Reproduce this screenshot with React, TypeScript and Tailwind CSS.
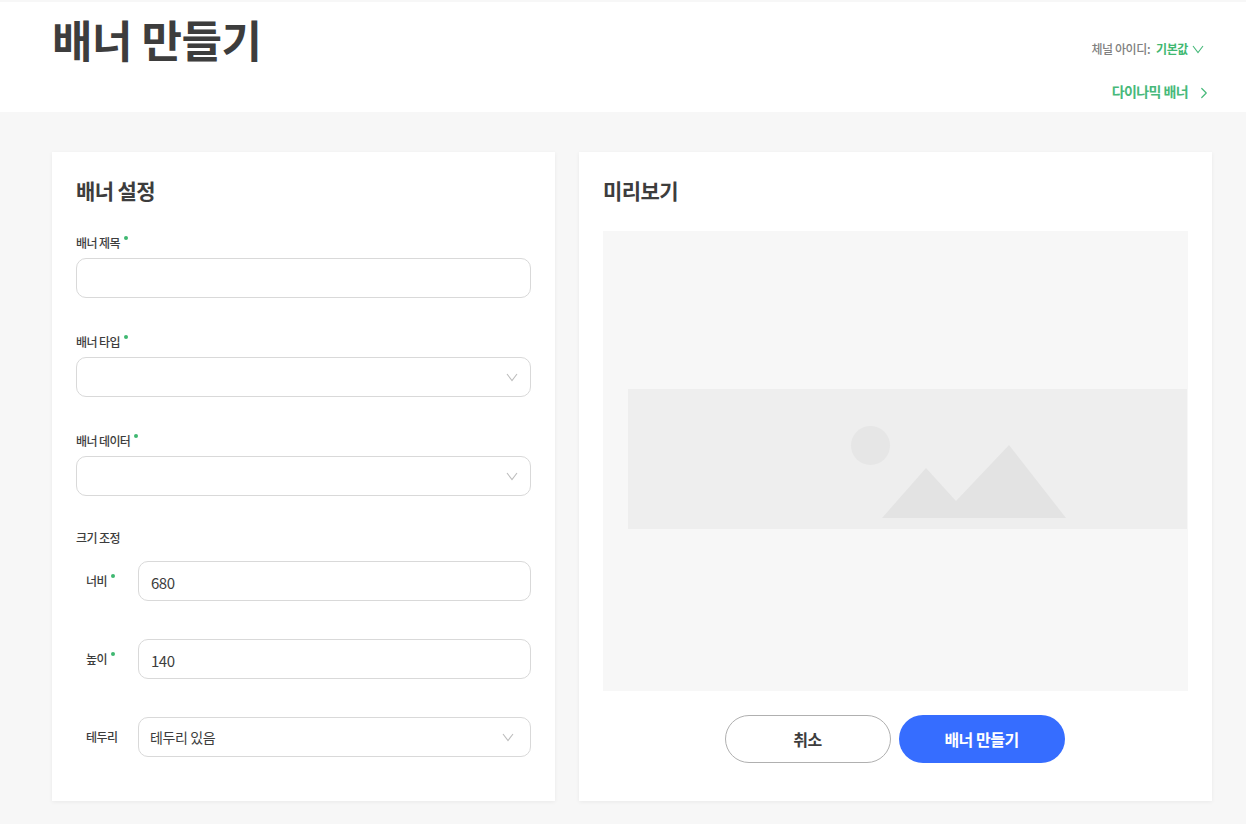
import React from "react";
import { ChevronRight } from "lucide-react";

const labelCls = "text-[12px] leading-[19px] font-medium text-[#3d3d3d] tracking-[-0.6px]";
const boxCls = "h-10 rounded-[10px] border border-[#d9d9d9] bg-white flex items-center justify-between text-[#3d3d3d]";

const Required = () => <span className="inline-block w-1 h-1 ml-1 rounded-full bg-[#3fb871] align-[8px]" />;

const Caret: React.FC<{ color?: string; className?: string }> = ({ color = "#bdbdbd", className }) => (
  <svg width="12" height="9" viewBox="0 0 12 9" fill="none" className={className}>
    <path d="M1 1 L6 7.5 L11 1" stroke={color} strokeWidth="1.1" />
  </svg>
);

const Field: React.FC<{ label: string; select?: boolean; className?: string }> = ({ label, select, className }) => (
  <div className={className}>
    <div className={labelCls}>
      {label}
      <Required />
    </div>
    <div className={`${boxCls} mt-[6px] pr-3`}>
      <span />
      {select && <Caret />}
    </div>
  </div>
);

const SizeRow: React.FC<{ label: string; value: string; required?: boolean; select?: boolean; className?: string }> = ({
  label,
  value,
  required,
  select,
  className,
}) => (
  <div className={`flex items-center ${className ?? ""}`}>
    <div className={`${labelCls} w-[62px] pl-[10px] ${required ? "-mt-[2px]" : "-mt-px"}`}>
      {label}
      {required && <Required />}
    </div>
    <div
      className={`${boxCls} flex-1 pr-4 ${
        select ? "pl-[11px] text-[14px] tracking-[-0.4px]" : "pl-3 pt-[4px] text-[15px] tracking-[-0.5px]"
      }`}
    >
      <span>{value}</span>
      {select && <Caret />}
    </div>
  </div>
);

export default function App() {
  return (
    <div className="min-h-[824px] bg-[#f7f7f7] pt-[2px] pb-[23px] font-['Noto_Sans_CJK_KR',sans-serif] overflow-hidden">
      <header className="h-[110px] bg-white pl-[52px] pr-[38px] flex justify-between">
        <h1 className="text-[44px] leading-[64px] mt-[5px] font-bold text-[#3d3d3d] tracking-[-0.5px]">배너 만들기</h1>
        <div className="flex flex-col items-end">
          <div className="flex items-center mt-[37px] h-5 text-[12px] tracking-[-0.4px]">
            <span className="font-medium text-[#808080]">체널 아이디:</span>
            <span className="ml-[6px] font-bold text-[#3fb871]">기본값</span>
            <Caret color="#47b97a" className="ml-[3.5px] mr-[4.5px]" />
          </div>
          <div className="flex items-center mt-[20px] h-6 text-[14px] tracking-[-0.6px] font-bold text-[#47b97a]">
            <span>다이나믹 배너</span>
            <ChevronRight size={18} strokeWidth={1.6} className="ml-[6.5px] -mr-[4.5px] mt-[4px]" />
          </div>
        </div>
      </header>
      <main className="flex gap-6 pl-[52px] pr-[34px] mt-10">
        <section className="w-[503px] h-[649px] bg-white px-6 pt-[23px] shadow-[0_1px_4px_rgba(0,0,0,0.06)]">
          <h2 className="text-[21px] leading-[32px] -mt-px font-bold text-[#3d3d3d] tracking-[-0.6px]">배너 설정</h2>
          <Field label="배너 제목" className="mt-[27px]" />
          <Field label="배너 타입" select className="mt-[34px]" />
          <Field label="배너 데이터" select className="mt-[34px]" />
          <div className={`${labelCls} mt-[32px]`}>크기 조정</div>
          <SizeRow label="너비" value="680" required className="mt-[14px]" />
          <SizeRow label="높이" value="140" required className="mt-[38px]" />
          <SizeRow label="테두리" value="테두리 있음" select className="mt-[38px]" />
        </section>
        <section className="flex-1 h-[649px] bg-white px-6 pt-[23px] shadow-[0_1px_4px_rgba(0,0,0,0.06)]">
          <h2 className="text-[21px] leading-[32px] -mt-px font-bold text-[#3d3d3d] tracking-[-0.6px]">미리보기</h2>
          <div className="h-[460px] mt-[25px] bg-[#f7f7f7] flex items-center pl-[25px] pr-px pb-1">
            <div className="flex-1 h-[140px] bg-[#eeeeee]">
              <svg width="559" height="140" viewBox="0 0 559 140">
                <circle cx="242.5" cy="56.5" r="19.5" fill="#e6e6e6" />
                <path d="M254 129 L298 79 L328 112 L381 56 L438 129 Z" fill="#e3e3e3" />
              </svg>
            </div>
          </div>
          <div className="flex justify-center gap-2 mt-6 pr-[2px]">
            <button className="w-[166px] h-12 rounded-full border border-[#b0b0b0] bg-white text-[16px] font-bold text-[#3d3d3d] tracking-[-0.5px]">
              취소
            </button>
            <button className="w-[166px] h-12 rounded-full bg-[#366dff] text-[16px] font-bold text-white tracking-[-0.5px]">
              배너 만들기
            </button>
          </div>
        </section>
      </main>
    </div>
  );
}
